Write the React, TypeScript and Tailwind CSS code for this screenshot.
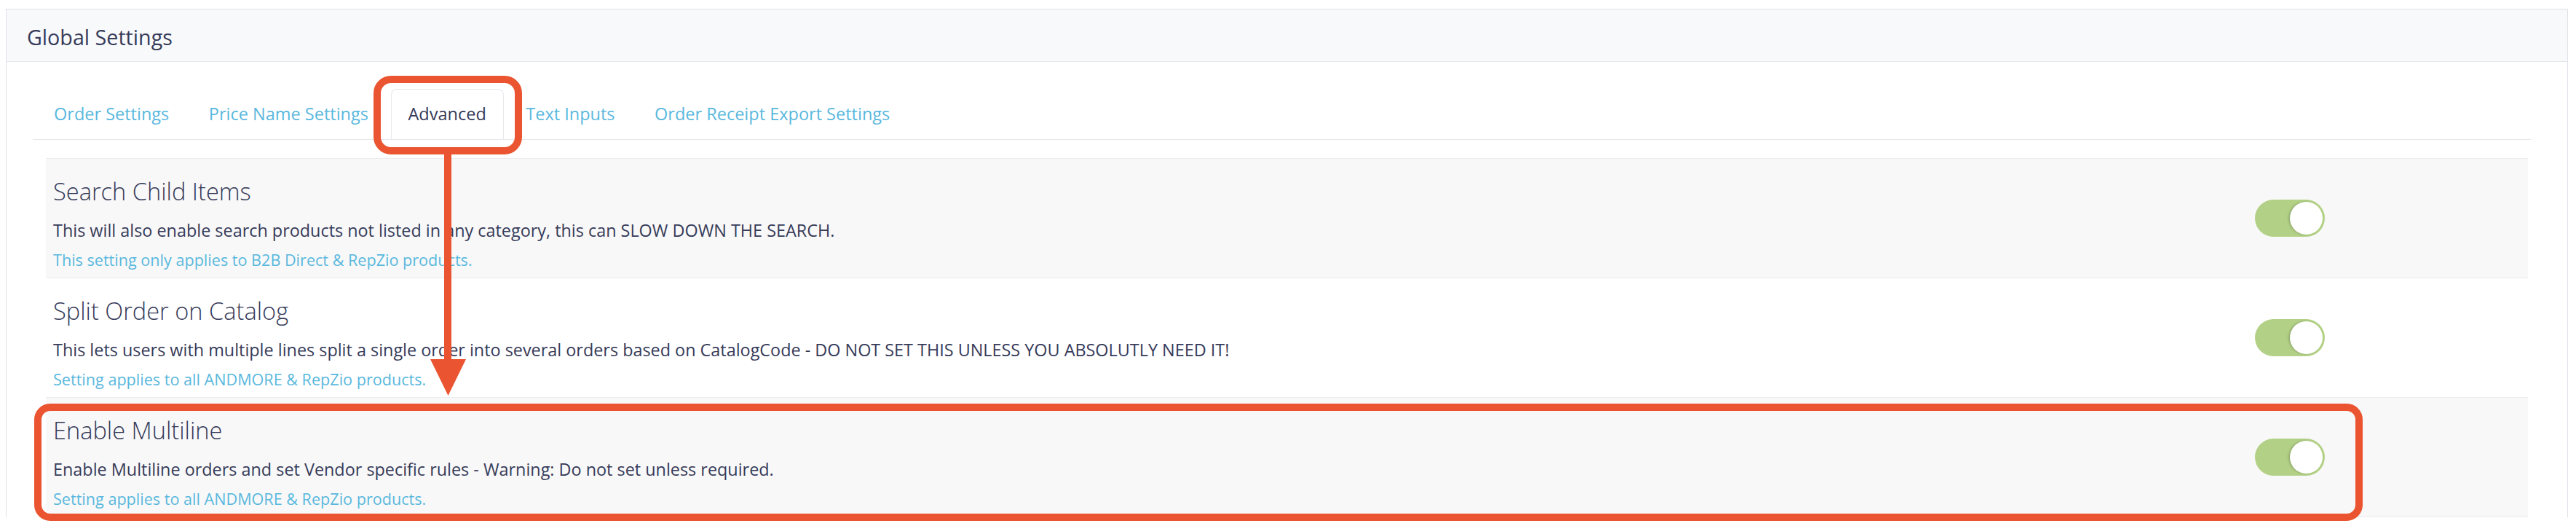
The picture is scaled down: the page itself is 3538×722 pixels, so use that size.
import React from 'react'

const TABS = ['Order Settings', 'Price Name Settings', 'Advanced', 'Text Inputs', 'Order Receipt Export Settings']

const ROWS = [
  {
    title: 'Search Child Items',
    desc: 'This will also enable search products not listed in any category, this can SLOW DOWN THE SEARCH.',
    note: 'This setting only applies to B2B Direct & RepZio products.',
    gray: true,
  },
  {
    title: 'Split Order on Catalog',
    desc: 'This lets users with multiple lines split a single order into several orders based on CatalogCode - DO NOT SET THIS UNLESS YOU ABSOLUTLY NEED IT!',
    note: 'Setting applies to all ANDMORE & RepZio products.',
    gray: false,
  },
  {
    title: 'Enable Multiline',
    desc: 'Enable Multiline orders and set Vendor specific rules - Warning: Do not set unless required.',
    note: 'Setting applies to all ANDMORE & RepZio products.',
    gray: true,
  },
]

function Toggle() {
  return (
    <div className="w-[96px] h-[51px] rounded-full bg-[#b3d186] flex items-center justify-end p-[3px] shrink-0">
      <div className="w-[45px] h-[45px] rounded-full bg-white shadow-[-2px_0_3px_rgba(0,0,0,0.18)]" />
    </div>
  )
}

export default function App() {
  return (
    <div className="relative w-full h-[722px] bg-white overflow-hidden font-['Open_Sans',sans-serif] text-[#363b59]">
      <div className="ml-[8px] mr-[11px] mt-[12px] border border-[#dfe2e8] border-b-0">
        <div className="h-[72px] bg-[#f8f9fb] border-b border-[#e3e6ec] flex items-center pl-[28px] pt-[4px]">
          <span className="text-[28.7px]">Global Settings</span>
        </div>

        <div className="pl-[36px] pr-[50px] pt-[37px]">
          {/* tabs */}
          <div className="flex gap-[6.5px] pl-[5px] border-b border-[#e6e8ec]">
            {TABS.map(t => (
              <div
                key={t}
                className={
                  t === 'Advanced'
                    ? 'h-[69px] px-[23px] flex items-center text-[23.5px] text-[#363b59] bg-white border border-b-0 border-[#e6e8ec] rounded-t-[8px] -mb-px'
                    : 'h-[69px] px-[23px] flex items-center text-[23.5px] text-[#5ab8de] border border-transparent'
                }
              >
                {t}
              </div>
            ))}
          </div>

          {/* rows */}
          <div className="mt-[25px] ml-[18px] mr-[4px] border-t border-[#ececec]">
            {ROWS.map(r => (
              <div
                key={r.title}
                className={`h-[164px] flex items-center border-b border-[#ececec] pl-[10px] pr-[279px] ${r.gray ? 'bg-[#f8f8f8]' : 'bg-white'}`}
              >
                <div className="flex-1 pt-[14px] self-start">
                  <div className="text-[32.6px] font-light leading-[40px] pt-[11px]">{r.title}</div>
                  <div className="text-[23.4px] leading-[32px] mt-[17px]">{r.desc}</div>
                  <div className="text-[21.6px] leading-[28px] mt-[11px] text-[#5ab8de]">{r.note}</div>
                </div>
                <Toggle />
              </div>
            ))}
          </div>
        </div>
      </div>

      {/* annotations */}
      <div className="absolute left-[513px] top-[104px] w-[204px] h-[108px] border-[10px] border-[#ea5430] rounded-[24px]" />
      <div className="absolute left-[610px] top-[212px] w-[10px] h-[284px] bg-[#ea5430]" />
      <svg className="absolute left-[591px] top-[493px]" width="49" height="50" viewBox="0 0 49 50">
        <polygon points="0,0 49,0 24.5,50" fill="#ea5430" />
      </svg>
      <div className="absolute left-[47px] top-[554px] w-[3198px] h-[161px] border-[10px] border-[#ea5430] rounded-[22px]" />
    </div>
  )
}
